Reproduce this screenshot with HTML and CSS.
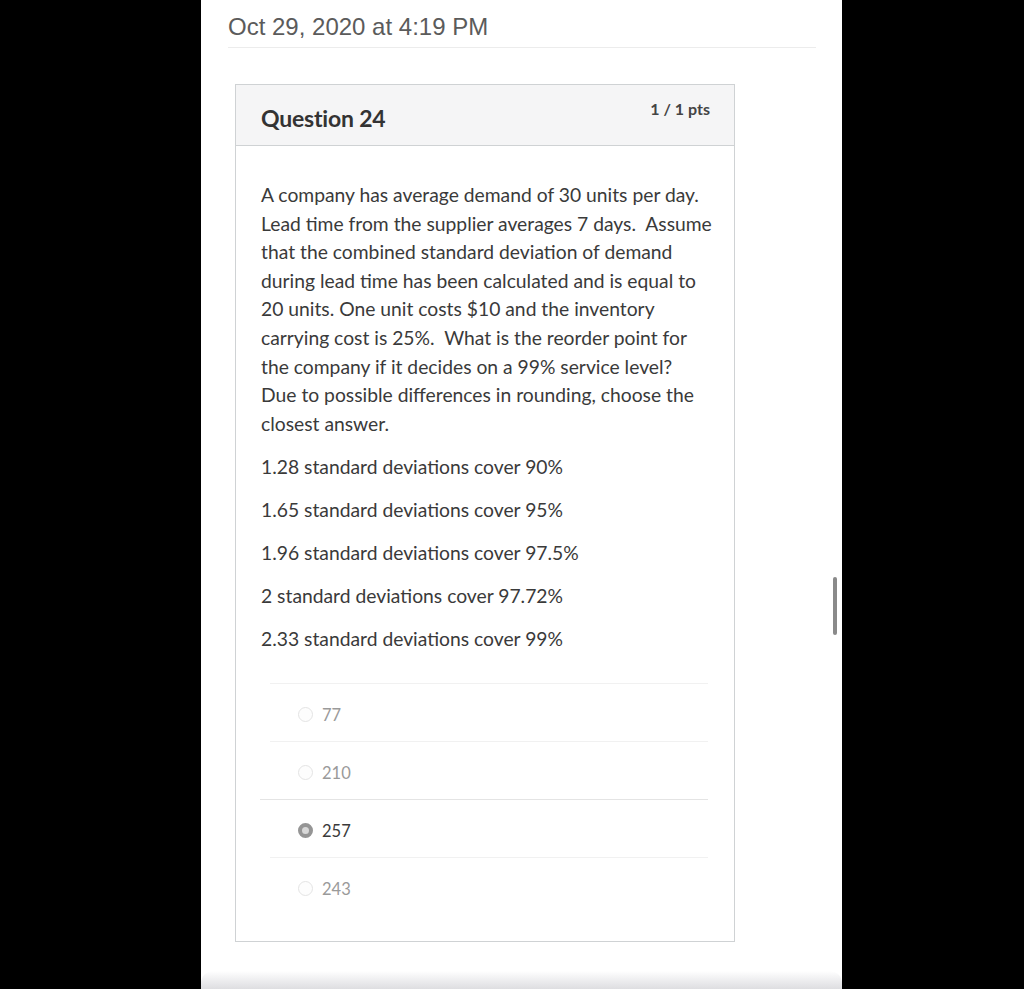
FILE: index.html
```html
<!DOCTYPE html>
<html>
<head>
<meta charset="utf-8">
<link rel="stylesheet" href="styles.css">
</head>
<body>
<div class="panel">
  <div class="date">Oct 29, 2020 at 4:19 PM</div>
  <div class="card">
    <div class="card-head">
      <div class="q-title">Question 24</div>
      <div class="q-pts">1 / 1 pts</div>
    </div>
    <div class="card-body">
      <p class="lead">A company has average demand of 30 units per day.<br>Lead time from the supplier averages 7 days.&nbsp; Assume<br>that the combined standard deviation of demand<br>during lead time has been calculated and is equal to<br>20 units. One unit costs $10 and the inventory<br>carrying cost is 25%.&nbsp; What is the reorder point for<br>the company if it decides on a 99% service level?<br>Due to possible differences in rounding, choose the<br>closest answer.</p>
      <p>1.28 standard deviations cover 90%</p>
      <p>1.65 standard deviations cover 95%</p>
      <p>1.96 standard deviations cover 97.5%</p>
      <p>2 standard deviations cover 97.72%</p>
      <p>2.33 standard deviations cover 99%</p>
      <div class="answers">
        <div class="answer"><span class="radio"></span><span class="ans-text">77</span></div>
        <div class="answer"><span class="radio"></span><span class="ans-text">210</span></div>
        <div class="answer selected"><span class="radio"></span><span class="ans-text">257</span></div>
        <div class="answer"><span class="radio"></span><span class="ans-text">243</span></div>
      </div>
    </div>
  </div>
  <div class="next-card"></div>
  <div class="scrollbar"></div>
</div>
</body>
</html>
```

FILE: styles.css
```css
html, body {
  margin: 0;
  padding: 0;
  background: #000;
  height: 989px;
  overflow: hidden;
}
.panel {
  position: relative;
  margin-left: 201px;
  width: 641px;
  height: 989px;
  background: #fff;
  box-sizing: border-box;
  padding: 0 26px 0 27px;
  display: flex;
  flex-direction: column;
  overflow: hidden;
}
.date {
  font-family: "Liberation Sans", Arial, sans-serif;
  font-size: 24px;
  color: #5b5b5b;
  height: 47px;
  line-height: 54px;
  border-bottom: 1px solid #ececec;
  overflow: hidden;
  flex-shrink: 0;
}
.card {
  margin-top: 36px;
  margin-left: 7px;
  width: 500px;
  box-sizing: border-box;
  border: 1px solid #cfd2d4;
  font-family: Lato, "Open Sans", sans-serif;
  color: #3d3d3d;
  flex-shrink: 0;
}
.card-head {
  background: #f5f5f6;
  height: 60px;
  border-bottom: 1px solid #cfd2d4;
  display: flex;
  justify-content: space-between;
  padding: 0 24px 0 25px;
}
.q-title {
  font-size: 23px;
  font-weight: 700;
  color: #333;
  padding-top: 19px;
  letter-spacing: -0.2px;
}
.q-pts {
  font-size: 16px;
  font-weight: 700;
  color: #444;
  padding-top: 14px;
}
.card-body {
  padding: 35px 18px 26px 25px;
}
.card-body p {
  margin: 0 0 14.4px 0;
  font-size: 19.3px;
  line-height: 28.6px;
  color: #3a3a3a;
  white-space: nowrap;
}
.answers {
  margin-top: 30px;
  padding-left: 9px;
  margin-right: 8px;
}
.answer {
  height: 53px;
  padding-top: 4px;
  border-top: 1px solid #f1f1f1;
  display: flex;
  align-items: center;
  padding-left: 28px;
  font-size: 16.5px;
  color: #9a9a9a;
}
.answer.selected {
  border-top: 1px solid #e4e4e4;
  margin-left: -10px;
  padding-left: 38px;
  color: #3a3a3a;
}
.radio {
  width: 13px;
  height: 13px;
  border-radius: 50%;
  border: 1px solid #e4e4e4;
  background: #fdfdfd;
  margin-right: 9px;
  flex-shrink: 0;
}
.selected .radio {
  width: 7px;
  height: 7px;
  border: 4px solid #959595;
  background: #d8d8d8;
}
.next-card {
  margin-top: 29px;
  margin-left: -27px;
  margin-right: -26px;
  height: 60px;
  flex-shrink: 0;
  border-radius: 12px 12px 0 0;
  background: linear-gradient(to bottom, #ffffff 0px, #ececee 10px, #dcdcdf 19px);
}
.scrollbar {
  position: absolute;
  left: 632px;
  top: 577px;
  width: 4px;
  height: 58px;
  border-radius: 2px;
  background: #8a8a8a;
}
```
